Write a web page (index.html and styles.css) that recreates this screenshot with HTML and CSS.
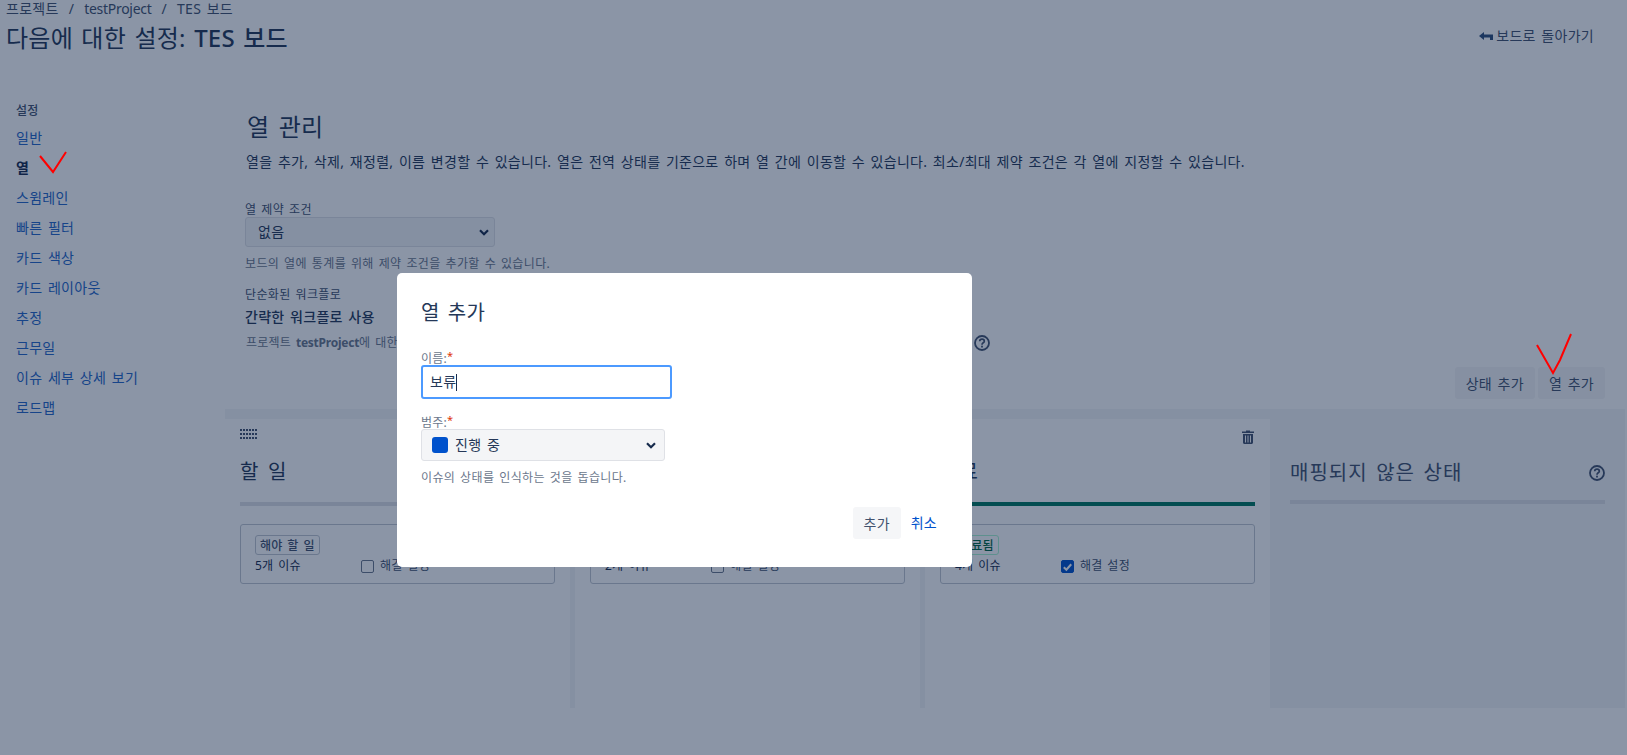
FILE: index.html
```html
<!DOCTYPE html>
<html lang="ko">
<head>
  <meta charset="UTF-8">
  <meta name="viewport" content="width=device-width, initial-scale=1.0">
  <title>다음에 대한 설정: TES 보드</title>
  <link rel="stylesheet" href="styles.css">
</head>
<body>
  <header class="page-header">
    <div>
      <nav class="crumbs">
        <a>프로젝트</a><span class="crumb-sep">/</span><a class="latin">testProject</a><span class="crumb-sep">/</span><a>TES 보드</a>
      </nav>
      <h1 class="page-title">다음에 대한 설정: <strong>TES 보드</strong></h1>
    </div>
    <a class="back-link">
      <svg width="14" height="10" viewBox="0 0 14 10"><path d="M0 5 5 1v2.5h9V9h-3V6.500H5V9z" fill="#2f4f7c"/></svg>
      보드로 돌아가기
    </a>
  </header>

  <div class="layout">
    <aside class="sidebar">
      <h4 class="side-title">설정</h4>
      <ul class="side-list">
        <li><a>일반</a></li>
        <li class="active"><a>열</a></li>
        <li><a>스윔레인</a></li>
        <li><a>빠른 필터</a></li>
        <li><a>카드 색상</a></li>
        <li><a>카드 레이아웃</a></li>
        <li><a>추정</a></li>
        <li><a>근무일</a></li>
        <li><a>이슈 세부 상세 보기</a></li>
        <li><a>로드맵</a></li>
      </ul>
    </aside>

    <main class="content">
      <div class="intro">
        <h2 class="content-title">열 관리</h2>
        <p class="content-desc">열을 추가, 삭제, 재정렬, 이름 변경할 수 있습니다. 열은 전역 상태를 기준으로 하며 열 간에 이동할 수 있습니다. 최소/최대 제약 조건은 각 열에 지정할 수 있습니다.</p>
        <label class="field-label constraint-label">열 제약 조건</label>
        <div class="fake-select constraint-select">
          <span>없음</span>
          <svg class="chevron" width="10" height="7" viewBox="0 0 10 7"><path d="M1 1.200 5 5.200l4-4" fill="none" stroke="#172b4d" stroke-width="2.200"/></svg>
        </div>
        <p class="help-text">보드의 열에 통계를 위해 제약 조건을 추가할 수 있습니다.</p>
        <label class="field-label workflow-label">단순화된 워크플로</label>
        <p class="workflow-name">간략한 워크플로 사용</p>
        <div class="workflow-note">
          <span class="workflow-text">프로젝트 <b class="latin">testProject</b>에 대한 간략한 워크플로를 사용하면 보드에서 바로 상태를 추가하고 관리할 수 있습니다.</span>
          <svg width="16" height="16" viewBox="0 0 16 16"><circle cx="8" cy="8" r="7" fill="none" stroke="#42526e" stroke-width="1.800"/><path d="M5.700 6.200C5.800 3.500 10.300 3.500 10.300 6.200 10.300 7.900 8 7.700 8 9.700" fill="none" stroke="#42526e" stroke-width="1.700"/><rect x="7.100" y="10.700" width="1.800" height="1.800" fill="#42526e"/></svg>
        </div>
      </div>

      <div class="toolbar">
        <button class="btn">상태 추가</button>
        <button class="btn">열 추가</button>
      </div>

      <section class="board">
        <div class="lane">
          <div class="lane-top">
            <span class="grip"></span>
            <svg class="trash" width="12" height="14" viewBox="0 0 12 14"><use href="#trash-icon"/></svg>
          </div>
          <h3 class="lane-title">할 일</h3>
          <div class="lane-line"></div>
          <div class="card">
            <span class="lozenge">해야 할 일</span>
            <div class="card-row">
              <span class="issue-count">5개 이슈</span>
              <span class="check-box"></span>
              <span>해결 설정</span>
            </div>
          </div>
        </div>

        <div class="lane">
          <div class="lane-top">
            <span class="grip"></span>
            <svg class="trash" width="12" height="14" viewBox="0 0 12 14"><use href="#trash-icon"/></svg>
          </div>
          <h3 class="lane-title">진행 중</h3>
          <div class="lane-line line-blue"></div>
          <div class="card">
            <span class="lozenge lozenge-blue">진행 중</span>
            <div class="card-row">
              <span class="issue-count">2개 이슈</span>
              <span class="check-box"></span>
              <span>해결 설정</span>
            </div>
          </div>
        </div>

        <div class="lane">
          <div class="lane-top">
            <span class="grip"></span>
            <svg class="trash" width="12" height="14" viewBox="0 0 12 14"><use href="#trash-icon"/></svg>
          </div>
          <h3 class="lane-title">완료</h3>
          <div class="lane-line line-green"></div>
          <div class="card">
            <span class="lozenge lozenge-green">완료됨</span>
            <div class="card-row">
              <span class="issue-count">4개 이슈</span>
              <span class="check-box checked">
                <svg width="14" height="14" viewBox="0 0 14 14"><path d="M3 7.300 5.800 10 11 4" fill="none" stroke="#fff" stroke-width="2.200"/></svg>
              </span>
              <span>해결 설정</span>
            </div>
          </div>
        </div>

        <div class="unmapped">
          <div class="unmapped-head">
            <h3 class="unmapped-title">매핑되지 않은 상태</h3>
            <svg width="16" height="16" viewBox="0 0 16 16"><circle cx="8" cy="8" r="7" fill="none" stroke="#42526e" stroke-width="1.800"/><path d="M5.700 6.200C5.800 3.500 10.300 3.500 10.300 6.200 10.300 7.900 8 7.700 8 9.700" fill="none" stroke="#42526e" stroke-width="1.700"/><rect x="7.100" y="10.700" width="1.800" height="1.800" fill="#42526e"/></svg>
          </div>
          <div class="lane-line"></div>
        </div>
      </section>
    </main>
  </div>

  <svg class="defs" width="0" height="0">
    <symbol id="trash-icon" viewBox="0 0 12 14">
      <path d="M4 1.500V.500h4v1h4V3H0V1.500z" fill="#42526e"/>
      <path fill-rule="evenodd" d="M1 4h10v8.500c0 .8-.7 1.500-1.500 1.500h-7C1.700 14 1 13.300 1 12.500zM3 5.500v7h1v-7zM5.500 5.500v7h1v-7zM8 5.500v7h1v-7z" fill="#42526e"/>
    </symbol>
  </svg>

  <div class="overlay"></div>

  <div class="modal">
    <h2 class="modal-title">열 추가</h2>
    <label class="modal-label">이름:<span class="req">*</span></label>
    <div class="name-input"><span>보류</span><span class="caret"></span></div>
    <label class="modal-label category-label">범주:<span class="req">*</span></label>
    <div class="fake-select category-select">
      <span class="color-dot"></span>
      <span class="category-name">진행 중</span>
      <svg class="chevron" width="10" height="7" viewBox="0 0 10 7"><path d="M1 1.200 5 5.200l4-4" fill="none" stroke="#172b4d" stroke-width="2.200"/></svg>
    </div>
    <p class="modal-help">이슈의 상태를 인식하는 것을 돕습니다.</p>
    <div class="modal-actions">
      <button class="btn btn-add">추가</button>
      <a class="cancel-link">취소</a>
    </div>
  </div>

  <!-- 빨간 체크 표시 -->
  <svg class="red-mark mark-side" width="30" height="24" viewBox="0 0 30 24"><path d="M1 5 14 21 27 1" fill="none" stroke="#f00" stroke-width="2"/></svg>
  <svg class="red-mark mark-btn" width="38" height="44" viewBox="0 0 38 44"><path d="M2 13 18 41 25 28 33 9 36 2" fill="none" stroke="#f00" stroke-width="2"/></svg>
</body>
</html>
```

FILE: styles.css
```css
* {
  box-sizing: border-box;
  letter-spacing: 0.02em;
  word-spacing: 0.12em;
}

html, body {
  height: 100%;
}

body {
  margin: 0;
  overflow: hidden;
  background-color: #fff;
  color: #253858;
  font-family: "Noto Sans", "Noto Sans CJK KR", sans-serif;
  font-size: 14px;
  line-height: 20px;
}

h1, h2, h3, h4, p, ul {
  margin: 0;
  padding: 0;
  font-weight: 400;
}

a {
  color: #0052cc;
  text-decoration: none;
}

.latin {
  letter-spacing: -0.02em;
}

/* 상단 헤더 */
.page-header {
  display: flex;
  justify-content: space-between;
  height: 50px;
  padding: 0 33px 0 6px;
}

.crumbs {
  height: 18px;
  line-height: 17px;
}

.crumbs a {
  color: #42526e;
}

.crumb-sep {
  margin: 0 10px;
  color: #42526e;
}

.page-title,
.page-title strong {
  letter-spacing: 0.01em;
  word-spacing: 0.08em;
}

.page-title {
  margin-top: 6px;
  font-size: 24px;
  line-height: 28px;
}

.page-title strong {
  font-weight: 500;
}

.back-link {
  display: flex;
  align-items: center;
  gap: 3px;
  margin-top: 26px;
  height: 20px;
  color: #42526e;
}

.layout {
  display: flex;
}

/* 사이드바 */
.sidebar {
  flex: none;
  width: 225px;
  padding: 52px 0 0 16px;
}

.side-title {
  height: 21px;
  font-size: 12px;
  font-weight: 500;
  line-height: 18px;
  color: #42526e;
}

.side-list {
  list-style: none;
}

.side-list li {
  height: 30px;
  line-height: 30px;
}

.side-list a {
  color: #2466c8;
}

.side-list .active a {
  color: #172b4d;
  font-weight: 700;
}

/* 본문 */
.content {
  flex: none;
  width: 1400px;
}

.intro {
  padding: 61px 0 0 20px;
}

.content-title {
  margin-left: 2px;
  font-size: 24px;
  line-height: 32px;
  letter-spacing: 0.01em;
}

.content-desc {
  margin-top: 9px;
  margin-left: 1px;
}

.field-label {
  display: block;
  height: 16px;
  font-size: 12px;
  line-height: 18px;
  letter-spacing: 0.03em;
  color: #42526e;
}

.constraint-label {
  margin-top: 29px;
}

.fake-select {
  display: flex;
  align-items: center;
  justify-content: space-between;
  background-color: #f4f5f7;
  border: 1px solid #dfe1e6;
  border-radius: 3px;
}

.constraint-select {
  width: 250px;
  height: 30px;
  padding: 0 5px 0 12px;
}

.help-text {
  margin-top: 9px;
  font-size: 12px;
  line-height: 16px;
  letter-spacing: 0.03em;
  color: #6b778c;
}

.workflow-label {
  margin-top: 14px;
}

.workflow-name {
  margin-top: 5px;
  font-weight: 500;
}

.workflow-note {
  display: flex;
  align-items: center;
  height: 16px;
  margin-top: 8px;
  margin-left: 1px;
  font-size: 12px;
  color: #6b778c;
}

.workflow-text {
  flex: none;
  width: 728px;
  overflow: hidden;
  white-space: nowrap;
}

.toolbar {
  display: flex;
  justify-content: flex-end;
  gap: 3px;
  margin-top: 16px;
  padding-right: 20px;
}

.btn {
  height: 32px;
  padding: 0 11px;
  border: 0;
  border-radius: 3px;
  background-color: rgba(9, 30, 66, 0.04);
  color: #42526e;
  font-family: inherit;
  font-size: 14px;
}

/* 보드 열 */
.board {
  display: grid;
  grid-template-columns: repeat(3, 345px) 1fr;
  gap: 5px;
  height: 299px;
  margin-top: 10px;
  padding-top: 10px;
  background-color: #f4f5f7;
}

.lane {
  padding: 10px 15px 0;
  background-color: #fff;
}

.lane-top {
  display: flex;
  justify-content: space-between;
  height: 14px;
}

.grip {
  width: 18px;
  height: 10px;
  background:
    linear-gradient(90deg, #fff 1px, transparent 1px) 2px 0 / 3px 4px,
    linear-gradient(#fff 2px, transparent 2px) 0 2px / 3px 4px,
    #42526e;
}

.trash {
  margin: 1px 1px 0 0;
}

.lane-title {
  margin-top: 15px;
  height: 26px;
  font-size: 20px;
  line-height: 28px;
  letter-spacing: 0.05em;
}

.lane-line {
  height: 4px;
  margin-top: 18px;
  background-color: #dfe1e6;
}

.line-blue {
  background-color: #0052cc;
}

.line-green {
  background-color: #00785f;
}

.card {
  height: 60px;
  margin-top: 18px;
  padding: 10px 14px;
  border: 1px solid #c1c7d0;
  border-radius: 3px;
  font-size: 12px;
  line-height: 16px;
  color: #42526e;
}

.lozenge {
  display: inline-block;
  height: 20px;
  padding: 0 4px;
  border: 1px solid #c1c7d0;
  border-radius: 3px;
  font-weight: 500;
  line-height: 20px;
}

.lozenge-blue {
  border-color: #b3d4ff;
  color: #0052cc;
}

.lozenge-green {
  border-color: #abf5d1;
  color: #006644;
}

.card-row {
  display: flex;
  align-items: center;
  height: 16px;
  margin-top: 3px;
  line-height: 18px;
}

.issue-count {
  flex: none;
  width: 106px;
  color: #172b4d;
}

.check-box {
  flex: none;
  display: flex;
  width: 13px;
  height: 13px;
  margin-right: 6px;
  border: 1px solid #6b778c;
  border-radius: 2px;
  background-color: #fff;
}

.check-box.checked {
  border-color: #0052cc;
  background-color: #0052cc;
}

.check-box svg {
  margin: -1px;
}

.unmapped {
  padding: 10px 20px 0 15px;
  background-color: #f4f5f7;
}

.unmapped-head {
  display: flex;
  align-items: center;
  justify-content: space-between;
  height: 28px;
  margin-top: 30px;
}

.unmapped-title {
  font-size: 20px;
  line-height: 30px;
  letter-spacing: 0.05em;
  color: #42526e;
}

.unmapped .lane-line {
  margin-top: 13px;
  background-color: #dfe1e6;
}

.defs {
  position: absolute;
}

/* 모달 */
.overlay {
  position: fixed;
  inset: 0;
  background-color: rgba(9, 30, 66, 0.47);
}

.modal {
  position: fixed;
  left: 397px;
  top: 273px;
  width: 575px;
  height: 294px;
  padding: 26px 24px 0;
  background-color: #fff;
  border-radius: 5px;
}

.modal-title {
  font-size: 20px;
  line-height: 28px;
}

.modal-label {
  display: block;
  height: 16px;
  font-size: 12px;
  line-height: 20px;
  color: #6b778c;
}

.modal-title + .modal-label {
  margin-top: 22px;
}

.req {
  position: relative;
  top: -3px;
  font-size: 11px;
  color: #de350b;
}

.name-input {
  display: flex;
  align-items: center;
  width: 251px;
  height: 34px;
  padding: 0 7px;
  border: 2px solid #4c9aff;
  border-radius: 3px;
}

.caret {
  width: 1px;
  height: 17px;
  background-color: #172b4d;
}

.category-label {
  margin-top: 14px;
}

.category-select {
  width: 244px;
  height: 32px;
  padding: 0 8px 0 10px;
}

.color-dot {
  flex: none;
  width: 16px;
  height: 16px;
  margin-right: 7px;
  border-radius: 3px;
  background-color: #0052cc;
}

.category-name {
  flex: 1;
}

.modal-help {
  margin-top: 9px;
  font-size: 12px;
  line-height: 16px;
  letter-spacing: 0.03em;
  color: #6b778c;
}

.modal-actions {
  display: flex;
  align-items: center;
  justify-content: flex-end;
  margin-top: 21px;
  margin-right: 11px;
}

.btn-add {
  width: 48px;
  padding: 0;
}

.cancel-link {
  margin-left: 10px;
}

/* 빨간 체크 표시 */
.red-mark {
  position: fixed;
}

.mark-side {
  left: 39px;
  top: 151px;
}

.mark-btn {
  left: 1535px;
  top: 332px;
}
```
